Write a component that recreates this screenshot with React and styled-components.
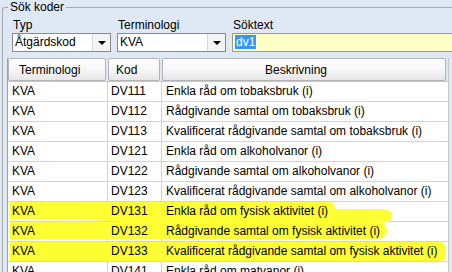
import React from 'react';
import styled, { createGlobalStyle } from 'styled-components';

const GlobalStyle = createGlobalStyle`
  html, body {
    margin: 0;
    padding: 0;
    width: 452px;
    height: 272px;
    overflow: hidden;
    background: #dfe8f5;
    font-family: 'Liberation Sans', Arial, sans-serif;
    font-size: 12px;
    color: #000;
  }
`;

const GroupBox = styled.section`
  margin: 7px 0 0 2px;
  height: 300px;
  border: 1px solid #a9a9a9;
  border-right: none;
  border-bottom: none;
  border-radius: 3px 0 0 0;
`;

const Title = styled.div`
  width: fit-content;
  margin: -8px 0 0 5px;
  padding: 0 2px;
  line-height: 14px;
  background: #dfe8f5;
`;

const Filters = styled.div`
  display: flex;
  gap: 6px;
  padding: 4px 0 0 9px;
`;

const Field = styled.div`
  display: flex;
  flex-direction: column;
  flex: none;
  width: ${(p) => p.width}px;
`;

const Label = styled.label`
  line-height: 14px;
  padding-left: 1px;
`;

const Combo = styled.div`
  display: flex;
  height: 19px;
  margin-top: 1px;
  border: 1px solid #8a8a8a;
  background: #fff;
  box-sizing: border-box;
`;

const ComboText = styled.span`
  flex: 1;
  line-height: 17px;
  padding-left: 2px;
`;

const ComboButton = styled.span`
  width: 17px;
  display: flex;
  align-items: center;
  justify-content: center;
  background: #f4f4f4;
  border-left: 1px solid #d8d8d8;

  &::after {
    content: '';
    border-left: 4px solid transparent;
    border-right: 4px solid transparent;
    border-top: 4px solid #000;
  }
`;

const SearchInput = styled.div`
  height: 19px;
  margin-top: 1px;
  border: 1px solid #9a9a9a;
  border-right: none;
  background: #ffffc6;
  box-sizing: border-box;
  padding: 1px 0 0 2px;
  line-height: 15px;
`;

const Selected = styled.span`
  background: #3399ff;
  color: #fff;
  padding: 0 1px;
`;

const Table = styled.div`
  margin: 6px 0 0 4px;
  width: 440px;
  background: #fff;
  border-left: 1px solid #a0a0a0;
  border-right: 1px solid #c8c8c8;
`;

const HeaderRow = styled.div`
  display: grid;
  grid-template-columns: 100px 54px 1fr;
  height: 23px;
  background: #dfe8f5;
  border-bottom: 1px solid #c8c8c8;
`;

const HeaderCell = styled.div`
  display: flex;
  align-items: center;
  justify-content: ${(p) => (p.center ? 'center' : 'flex-start')};
  padding: ${(p) => p.pad};
  margin-right: 2px;
  border: 1px solid #b4b4b4;
  border-radius: 2px;
  background: linear-gradient(#ffffff 0%, #f7f7f7 50%, #e6e6e6 100%);
  box-sizing: border-box;
`;

const Body = styled.div`
  position: relative;
`;

const Row = styled.div`
  display: grid;
  grid-template-columns: 100px 54px 1fr;
  height: 20px;
  border-bottom: 1px solid #d4d4d4;
  box-sizing: border-box;
`;

const Cell = styled.div`
  padding-left: ${(p) => p.pad}px;
  line-height: 19px;
  white-space: nowrap;
  overflow: hidden;
  border-right: ${(p) => (p.last ? 'none' : '1px solid #d4d4d4')};

  span {
    position: relative;
    z-index: 2;
  }
`;

const Marker = styled.svg`
  position: absolute;
  left: 0;
  top: 0;
  z-index: 1;
  pointer-events: none;
`;

const rows = [
  ['DV111', 'Enkla råd om tobaksbruk (i)'],
  ['DV112', 'Rådgivande samtal om tobaksbruk (i)'],
  ['DV113', 'Kvalificerat rådgivande samtal om tobaksbruk (i)'],
  ['DV121', 'Enkla råd om alkoholvanor (i)'],
  ['DV122', 'Rådgivande samtal om alkoholvanor (i)'],
  ['DV123', 'Kvalificerat rådgivande samtal om alkoholvanor (i)'],
  ['DV131', 'Enkla råd om fysisk aktivitet (i)'],
  ['DV132', 'Rådgivande samtal om fysisk aktivitet (i)'],
  ['DV133', 'Kvalificerat rådgivande samtal om fysisk aktivitet (i)'],
  ['DV141', 'Enkla råd om matvanor (i)'],
];

export default function App() {
  return (
    <>
      <GlobalStyle />
      <GroupBox>
        <Title>Sök koder</Title>
        <Filters>
          <Field width={99}>
            <Label>Typ</Label>
            <Combo>
              <ComboText>Åtgärdskod</ComboText>
              <ComboButton />
            </Combo>
          </Field>
          <Field width={109}>
            <Label>Terminologi</Label>
            <Combo>
              <ComboText>KVA</ComboText>
              <ComboButton />
            </Combo>
          </Field>
          <Field width={230}>
            <Label>Söktext</Label>
            <SearchInput>
              <Selected>dv1</Selected>
            </SearchInput>
          </Field>
        </Filters>
        <Table>
          <HeaderRow>
            <HeaderCell pad="0 0 0 10px">Terminologi</HeaderCell>
            <HeaderCell pad="0 0 0 7px">Kod</HeaderCell>
            <HeaderCell center pad="0 16px 0 0">Beskrivning</HeaderCell>
          </HeaderRow>
          <Body>
            <Marker width="440" height="200" viewBox="0 0 440 200">
              <path
                fill="#ffff33"
                d="M2,120 H323 Q327,121 327,127 H376 Q385,128 384,135 Q383,141 370,141 H130 Q60,136 2,137 Z"
              />
              <path
                fill="#ffff33"
                d="M2,140 H370 Q379,141 379,148 Q379,157 368,157 H2 Z"
              />
              <path
                fill="#ffff33"
                d="M2,160 H433 Q438,161 438,168 V175 Q437,179 431,179 H2 Z"
              />
            </Marker>
            {rows.map(([code, text]) => (
              <Row key={code}>
                <Cell pad={4}><span>KVA</span></Cell>
                <Cell pad={3}><span>{code}</span></Cell>
                <Cell pad={4} last><span>{text}</span></Cell>
              </Row>
            ))}
          </Body>
        </Table>
      </GroupBox>
    </>
  );
}
